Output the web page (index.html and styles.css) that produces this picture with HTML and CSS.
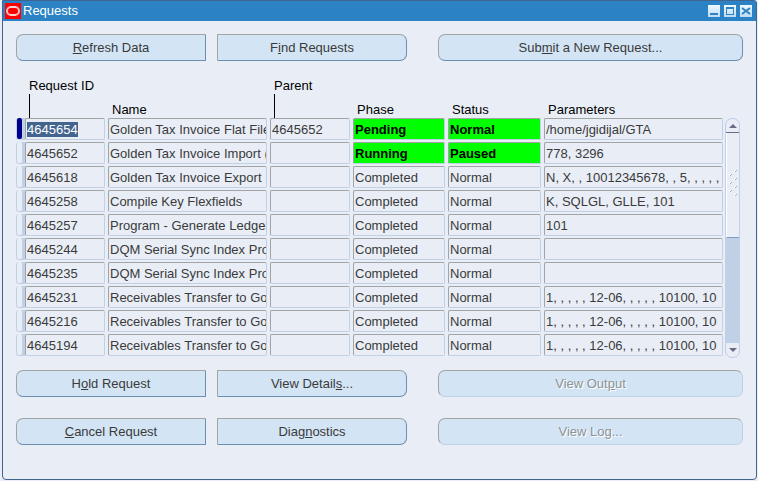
FILE: index.html
```html
<!DOCTYPE html>
<html lang="en" dir="ltr">
<head>
  <meta charset="UTF-8">
  <meta name="viewport" content="width=device-width, initial-scale=1.0">
  <title>Requests</title>
  <link rel="stylesheet" href="styles.css">
</head>
<body>
  <main class="window">
    <header class="title-bar">
      <svg class="logo" viewBox="0 0 16 16" aria-hidden="true">
        <rect width="16" height="16" fill="#ff0000"/>
        <rect x="2" y="4" width="12" height="8" rx="4" fill="none" stroke="#ffb8b8" stroke-width="2"/>
        <path d="M5 4h6M5 12h6" stroke="#ffe8e8"/>
      </svg>
      <h1 class="title">Requests</h1>
      <div class="window-controls">
        <button class="window-btn" type="button" aria-label="Minimize">
          <svg viewBox="0 0 12 12"><path d="M2 9h8" stroke="#2b83c5" stroke-width="2"/></svg>
        </button>
        <button class="window-btn" type="button" aria-label="Maximize">
          <svg viewBox="0 0 12 12"><path d="M2 2h8v8H2zM3 4v5h6V4z" fill="#2b83c5" fill-rule="evenodd"/></svg>
        </button>
        <button class="window-btn" type="button" aria-label="Close">
          <svg viewBox="0 0 12 12"><path d="M2 3l8 6M10 3L2 9" stroke="#2b83c5" stroke-width="2"/></svg>
        </button>
      </div>
    </header>

    <div class="content">
      <div class="button-row">
        <button class="btn btn-left" type="button"><u>R</u>efresh Data</button>
        <button class="btn btn-right" type="button">F<u>i</u>nd Requests</button>
        <button class="btn btn-wide" type="button">Sub<u>m</u>it a New Request...</button>
      </div>

      <div class="records">
        <table class="record-table">
          <colgroup>
            <col class="col-mark">
            <col class="col-id">
            <col class="col-name">
            <col class="col-id">
            <col class="col-phase">
            <col class="col-status">
            <col>
          </colgroup>
          <thead>
            <tr>
              <td></td>
              <th class="raised" scope="col" id="h-id">Request ID</th>
              <th scope="col" id="h-name">Name</th>
              <th class="raised" scope="col" id="h-parent">Parent</th>
              <th scope="col" id="h-phase">Phase</th>
              <th scope="col" id="h-status">Status</th>
              <th scope="col" id="h-params">Parameters</th>
            </tr>
          </thead>
          <tbody>
            <tr>
              <td><span class="mark current"></span></td>
              <td><input class="field" id="current-id" aria-labelledby="h-id" value="4645654" readonly></td>
              <td><input class="field" aria-labelledby="h-name" value="Golden Tax Invoice Flat File" readonly></td>
              <td><input class="field" aria-labelledby="h-parent" value="4645652" readonly></td>
              <td><input class="field active" aria-labelledby="h-phase" value="Pending" readonly></td>
              <td><input class="field active" aria-labelledby="h-status" value="Normal" readonly></td>
              <td><input class="field" aria-labelledby="h-params" value="/home/jgidijal/GTA" readonly></td>
            </tr>
            <tr>
              <td><span class="mark"></span></td>
              <td><input class="field" aria-labelledby="h-id" value="4645652" readonly></td>
              <td><input class="field" aria-labelledby="h-name" value="Golden Tax Invoice Import (" readonly></td>
              <td><input class="field" aria-labelledby="h-parent" value="" readonly></td>
              <td><input class="field active" aria-labelledby="h-phase" value="Running" readonly></td>
              <td><input class="field active" aria-labelledby="h-status" value="Paused" readonly></td>
              <td><input class="field" aria-labelledby="h-params" value="778, 3296" readonly></td>
            </tr>
            <tr>
              <td><span class="mark"></span></td>
              <td><input class="field" aria-labelledby="h-id" value="4645618" readonly></td>
              <td><input class="field" aria-labelledby="h-name" value="Golden Tax Invoice Export" readonly></td>
              <td><input class="field" aria-labelledby="h-parent" value="" readonly></td>
              <td><input class="field" aria-labelledby="h-phase" value="Completed" readonly></td>
              <td><input class="field" aria-labelledby="h-status" value="Normal" readonly></td>
              <td><input class="field" aria-labelledby="h-params" value="N, X, , 10012345678, , 5, , , , ," readonly></td>
            </tr>
            <tr>
              <td><span class="mark"></span></td>
              <td><input class="field" aria-labelledby="h-id" value="4645258" readonly></td>
              <td><input class="field" aria-labelledby="h-name" value="Compile Key Flexfields" readonly></td>
              <td><input class="field" aria-labelledby="h-parent" value="" readonly></td>
              <td><input class="field" aria-labelledby="h-phase" value="Completed" readonly></td>
              <td><input class="field" aria-labelledby="h-status" value="Normal" readonly></td>
              <td><input class="field" aria-labelledby="h-params" value="K, SQLGL, GLLE, 101" readonly></td>
            </tr>
            <tr>
              <td><span class="mark"></span></td>
              <td><input class="field" aria-labelledby="h-id" value="4645257" readonly></td>
              <td><input class="field" aria-labelledby="h-name" value="Program - Generate Ledger" readonly></td>
              <td><input class="field" aria-labelledby="h-parent" value="" readonly></td>
              <td><input class="field" aria-labelledby="h-phase" value="Completed" readonly></td>
              <td><input class="field" aria-labelledby="h-status" value="Normal" readonly></td>
              <td><input class="field" aria-labelledby="h-params" value="101" readonly></td>
            </tr>
            <tr>
              <td><span class="mark"></span></td>
              <td><input class="field" aria-labelledby="h-id" value="4645244" readonly></td>
              <td><input class="field" aria-labelledby="h-name" value="DQM Serial Sync Index Pro" readonly></td>
              <td><input class="field" aria-labelledby="h-parent" value="" readonly></td>
              <td><input class="field" aria-labelledby="h-phase" value="Completed" readonly></td>
              <td><input class="field" aria-labelledby="h-status" value="Normal" readonly></td>
              <td><input class="field" aria-labelledby="h-params" value="" readonly></td>
            </tr>
            <tr>
              <td><span class="mark"></span></td>
              <td><input class="field" aria-labelledby="h-id" value="4645235" readonly></td>
              <td><input class="field" aria-labelledby="h-name" value="DQM Serial Sync Index Pro" readonly></td>
              <td><input class="field" aria-labelledby="h-parent" value="" readonly></td>
              <td><input class="field" aria-labelledby="h-phase" value="Completed" readonly></td>
              <td><input class="field" aria-labelledby="h-status" value="Normal" readonly></td>
              <td><input class="field" aria-labelledby="h-params" value="" readonly></td>
            </tr>
            <tr>
              <td><span class="mark"></span></td>
              <td><input class="field" aria-labelledby="h-id" value="4645231" readonly></td>
              <td><input class="field" aria-labelledby="h-name" value="Receivables Transfer to Go" readonly></td>
              <td><input class="field" aria-labelledby="h-parent" value="" readonly></td>
              <td><input class="field" aria-labelledby="h-phase" value="Completed" readonly></td>
              <td><input class="field" aria-labelledby="h-status" value="Normal" readonly></td>
              <td><input class="field" aria-labelledby="h-params" value="1, , , , , 12-06, , , , , 10100, 10" readonly></td>
            </tr>
            <tr>
              <td><span class="mark"></span></td>
              <td><input class="field" aria-labelledby="h-id" value="4645216" readonly></td>
              <td><input class="field" aria-labelledby="h-name" value="Receivables Transfer to Go" readonly></td>
              <td><input class="field" aria-labelledby="h-parent" value="" readonly></td>
              <td><input class="field" aria-labelledby="h-phase" value="Completed" readonly></td>
              <td><input class="field" aria-labelledby="h-status" value="Normal" readonly></td>
              <td><input class="field" aria-labelledby="h-params" value="1, , , , , 12-06, , , , , 10100, 10" readonly></td>
            </tr>
            <tr>
              <td><span class="mark"></span></td>
              <td><input class="field" aria-labelledby="h-id" value="4645194" readonly></td>
              <td><input class="field" aria-labelledby="h-name" value="Receivables Transfer to Go" readonly></td>
              <td><input class="field" aria-labelledby="h-parent" value="" readonly></td>
              <td><input class="field" aria-labelledby="h-phase" value="Completed" readonly></td>
              <td><input class="field" aria-labelledby="h-status" value="Normal" readonly></td>
              <td><input class="field" aria-labelledby="h-params" value="1, , , , , 12-06, , , , , 10100, 10" readonly></td>
            </tr>
          </tbody>
        </table>

        <div class="scrollbar">
          <button class="scroll-btn scroll-up" type="button" aria-label="Scroll up">
            <svg viewBox="0 0 8 4"><path d="M0 4L4 0l4 4z" fill="#6b6b87"/></svg>
          </button>
          <div class="scroll-thumb">
            <svg class="grip" viewBox="0 0 8 28" shape-rendering="crispEdges" aria-hidden="true">
              <path d="M5 0h2v2h-2zM0 4h2v2h-2zM5 8h2v2h-2zM0 12h2v2h-2zM5 16h2v2h-2zM0 20h2v2h-2zM5 24h2v2h-2z" fill="#ffffff"/>
              <path d="M7 0h1v1h-1zM6 1h1v1h-1zM2 4h1v1h-1zM1 5h1v1h-1zM7 8h1v1h-1zM6 9h1v1h-1zM2 12h1v1h-1zM1 13h1v1h-1zM7 16h1v1h-1zM6 17h1v1h-1zM2 20h1v1h-1zM1 21h1v1h-1zM7 24h1v1h-1zM6 25h1v1h-1z" fill="#8fadd0"/>
            </svg>
          </div>
          <button class="scroll-btn scroll-down" type="button" aria-label="Scroll down">
            <svg viewBox="0 0 8 4"><path d="M0 0l4 4 4-4z" fill="#6b6b87"/></svg>
          </button>
        </div>
      </div>

      <div class="button-row">
        <button class="btn btn-left" type="button">H<u>o</u>ld Request</button>
        <button class="btn btn-right" type="button">View Detail<u>s</u>...</button>
        <button class="btn btn-wide" type="button" disabled>View Out<u>p</u>ut</button>
        <button class="btn btn-left" type="button"><u>C</u>ancel Request</button>
        <button class="btn btn-right" type="button">Diag<u>n</u>ostics</button>
        <button class="btn btn-wide" type="button" disabled>View Lo<u>g</u>...</button>
      </div>
    </div>
  </main>

  <script>
    // Start on the first request with its ID selected
    const currentId = document.getElementById('current-id');
    currentId.focus();
    currentId.select();
  </script>
</body>
</html>
```
FILE: styles.css
```css
:root {
  --canvas: #e9eef6;
  --frame: #43648f;
  --title-blue: #2b83c5;
  --button-bg: #d3e5f5;
  --light-edge: #c0d0e7;
  --gray-edge: #a0a4a4;
  --text: #3a3a3a;
}

* {
  box-sizing: border-box;
}

body {
  margin: 0;
  padding: 0 1px 1px 2px;
  font: 13px/16px "Liberation Sans", Arial, sans-serif;
  color: var(--text);
  background: var(--canvas);
}

.window {
  min-height: calc(100vh - 1px);
  border: 1px solid var(--frame);
  border-radius: 0 3px 4px 4px;
  background: var(--canvas);
}

/* Title bar */
.title-bar {
  display: flex;
  align-items: center;
  height: 20px;
  padding: 0 4px 0 2px;
  background: var(--title-blue);
}

.logo {
  width: 16px;
  height: 16px;
}

.title {
  flex: 1;
  margin: 0 0 0 2px;
  font-size: 13px;
  font-weight: normal;
  color: #ffffff;
}

.window-controls {
  display: flex;
  gap: 4px;
}

.window-btn {
  width: 12px;
  height: 12px;
  padding: 0;
  border: 0;
  background: linear-gradient(#f0f8ff, #bcdcf4);
}

.window-btn svg {
  display: block;
}

/* Buttons */
.content {
  padding: 13px 13px 32px;
}

.button-row {
  display: grid;
  grid-template-columns: 190fr 190fr 325fr;
  gap: 21px 11px;
}

.btn {
  height: 27px;
  padding: 0;
  border: 1px solid;
  border-color: var(--gray-edge) #6d8db3 #6d8db3 var(--gray-edge);
  background: var(--button-bg);
  font: inherit;
  color: var(--text);
}

.btn-left {
  border-radius: 7px 1px 1px 7px;
}

.btn-right {
  border-radius: 1px 7px 7px 1px;
}

.btn-wide {
  margin-left: 20px;
  border-radius: 7px;
}

.btn:disabled {
  border-right-color: var(--light-edge);
  border-bottom-color: var(--light-edge);
  color: #8e9296;
  text-shadow: 1px 1px #ffffff;
}

/* Records */
.records {
  display: flex;
  align-items: flex-end;
  padding: 17px 3px 12px 0;
}

.record-table {
  flex: 1;
  width: 100%;
  table-layout: fixed;
  border-collapse: collapse;
}

.col-mark {
  width: 9px;
}

.col-id {
  width: 83px;
}

.col-name {
  width: 162px;
}

.col-phase {
  width: 95px;
}

.col-status {
  width: 96px;
}

.record-table th {
  height: 40px;
  padding: 0 0 0 4px;
  vertical-align: bottom;
  text-align: left;
  font-weight: normal;
  white-space: nowrap;
  color: #000000;
}

.record-table .raised::after {
  content: "";
  display: block;
  width: 1px;
  height: 24px;
  background: #000000;
}

.record-table td {
  padding: 0 3px 2px 0;
}

.record-table td:first-child {
  padding-right: 0;
}

.record-table td:last-child {
  padding-right: 2px;
}

.field {
  display: block;
  width: 100%;
  height: 22px;
  padding: 0 0 0 1px;
  border: 1px solid;
  border-color: var(--gray-edge) var(--light-edge) var(--light-edge) var(--gray-edge);
  border-radius: 2px;
  background: var(--canvas);
  font: inherit;
  color: var(--text);
  outline: none;
}

.field::selection {
  background: #43648f;
  color: #ffffff;
}

.field.active {
  background: #00ff00;
  font-weight: bold;
  color: #000000;
}

.mark {
  display: block;
  height: 22px;
  padding: 0 3px 0 1px;
  border-radius: 3px 0 0 3px;
  background: var(--light-edge);
}

.mark::before {
  content: "";
  display: block;
  height: 21px;
  border-radius: 2px;
  background: var(--canvas);
}

.mark.current::before {
  background: #00008b;
}

/* Scroll bar */
.scrollbar {
  display: flex;
  flex-direction: column;
  width: 15px;
  height: 240px;
  border: 1px solid var(--light-edge);
  border-radius: 7px;
  background: var(--light-edge);
  overflow: hidden;
}

.scroll-btn {
  display: flex;
  align-items: center;
  justify-content: center;
  height: 14px;
  padding: 0;
  border: 0;
  background: var(--canvas);
}

.scroll-btn svg {
  width: 8px;
  height: 4px;
}

.scroll-up {
  border-bottom: 1px solid #6b6b87;
}

.scroll-down {
  margin-top: auto;
}

.scroll-thumb {
  height: 105px;
  padding: 37px 0 0 2px;
  border-left: 1px solid #ffffff;
  border-bottom: 1px solid #7f9cc0;
  background: var(--canvas);
}

.grip {
  display: block;
  width: 8px;
  height: 28px;
}
```
